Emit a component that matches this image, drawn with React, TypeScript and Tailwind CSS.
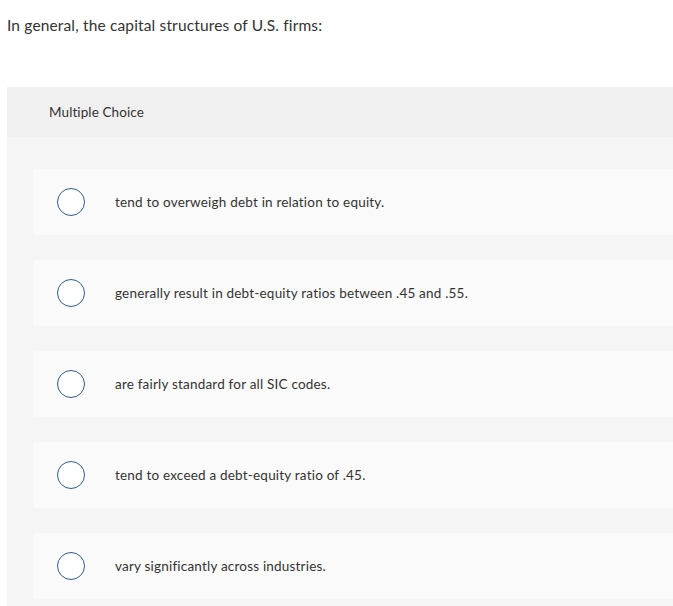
import React from "react";

const options = [
  "tend to overweigh debt in relation to equity.",
  "generally result in debt-equity ratios between .45 and .55.",
  "are fairly standard for all SIC codes.",
  "tend to exceed a debt-equity ratio of .45.",
  "vary significantly across industries.",
];

export default function App() {
  return (
    <div className="w-[673px] h-[606px] overflow-hidden bg-white text-[#333]" style={{ fontFamily: "Lato, 'Open Sans', sans-serif" }}>
      <div className="pt-[15px] pl-[7px] text-[15.5px] tracking-[0.15px] leading-[20px]">In general, the capital structures of U.S. firms:</div>
      <div className="ml-[7px] mt-[52px] bg-[#f5f5f5]">
        <div className="h-[50px] bg-[#f0f0f0] flex items-center pl-[42px] text-[13.5px] tracking-[0.1px]">Multiple Choice</div>
        <div className="pt-[32px] pb-[20px] pl-[26px] flex flex-col gap-[25px]">
          {options.map((o) => (
            <div key={o} className="h-[66px] bg-[#fafafa] rounded-l-[3px] flex items-center">
              <div className="ml-[24px] w-[28px] h-[28px] rounded-full border-[1.5px] border-[#2d5d8c] bg-white" />
              <div className="ml-[30px] text-[13.5px] tracking-[0.2px]">{o}</div>
            </div>
          ))}
        </div>
      </div>
    </div>
  );
}
